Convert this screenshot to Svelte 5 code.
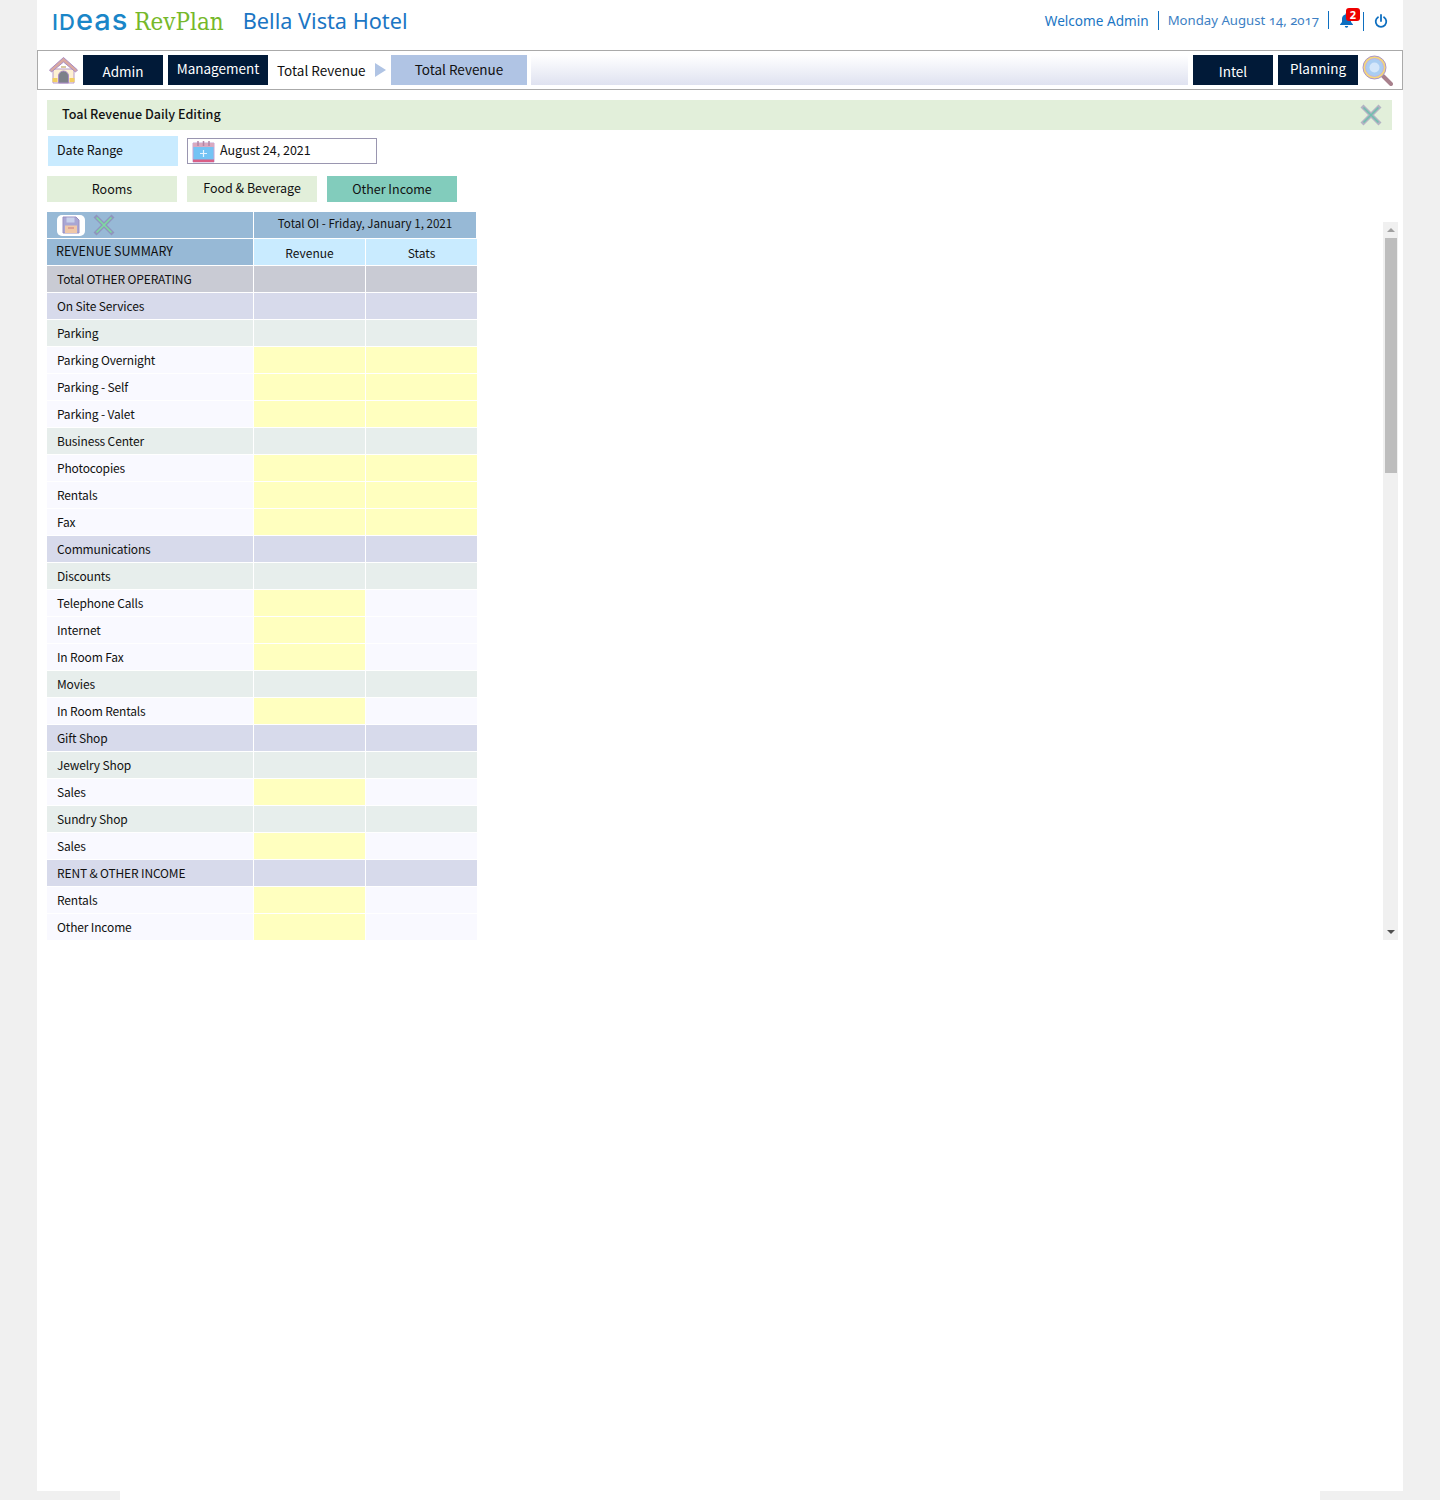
<script>
  const rows = [
    { label: 'Total OTHER OPERATING', kind: 'total' },
    { label: 'On Site Services', kind: 'section' },
    { label: 'Parking', kind: 'group' },
    { label: 'Parking Overnight', kind: 'leaf', rev: true, stats: true },
    { label: 'Parking - Self', kind: 'leaf', rev: true, stats: true },
    { label: 'Parking - Valet', kind: 'leaf', rev: true, stats: true },
    { label: 'Business Center', kind: 'group' },
    { label: 'Photocopies', kind: 'leaf', rev: true, stats: true },
    { label: 'Rentals', kind: 'leaf', rev: true, stats: true },
    { label: 'Fax', kind: 'leaf', rev: true, stats: true },
    { label: 'Communications', kind: 'section' },
    { label: 'Discounts', kind: 'group' },
    { label: 'Telephone Calls', kind: 'leaf', rev: true },
    { label: 'Internet', kind: 'leaf', rev: true },
    { label: 'In Room Fax', kind: 'leaf', rev: true },
    { label: 'Movies', kind: 'group' },
    { label: 'In Room Rentals', kind: 'leaf', rev: true },
    { label: 'Gift Shop', kind: 'section' },
    { label: 'Jewelry Shop', kind: 'group' },
    { label: 'Sales', kind: 'leaf', rev: true },
    { label: 'Sundry Shop', kind: 'group' },
    { label: 'Sales', kind: 'leaf', rev: true },
    { label: 'RENT & OTHER INCOME', kind: 'section' },
    { label: 'Rentals', kind: 'leaf', rev: true },
    { label: 'Other Income', kind: 'leaf', rev: true }
  ];
</script>

{#snippet cross( size, edge, green )}
  <svg xmlns="http://www.w3.org/2000/svg" width={size} height={size} viewBox="0 0 22 22">
    <path d="M2 2l18 18M20 2L2 20" stroke={edge} stroke-width="4.200" fill="none" />
    <path d="M3.500 3.500l15 15M18.500 3.500l-15 15" stroke={green} stroke-width="1.600" fill="none" />
  </svg>
{/snippet}

<div class="page">
  <header>
    <div class="brand">
      <span class="ideas"><span class="caps">ID</span>eas</span>
      <span class="revplan">RevPlan</span>
      <span class="hotel">Bella Vista Hotel</span>
    </div>
    <div class="status">
      <span class="welcome">Welcome Admin</span>
      <span class="date">Monday August 14, 2017</span>
      <span class="bell">
        <svg xmlns="http://www.w3.org/2000/svg" width="15" height="16" viewBox="0 0 15 16">
          <path fill="#0e6fc0" d="M7.500 1a1 1 0 0 1 1 1v.6C10.700 3 12 4.800 12 7v3l2 2.500v.5H1v-.5L3 10V7c0-2.200 1.300-4 3.500-4.400V2a1 1 0 0 1 1-1zM5.800 14h3.400a1.700 1.700 0 0 1-3.400 0z" />
        </svg>
        <b>2</b>
      </span>
      <span class="power">
        <svg xmlns="http://www.w3.org/2000/svg" width="14" height="14" viewBox="0 0 14 14">
          <path d="M4 3.200a5.300 5.300 0 1 0 6 0M7 1v6" fill="none" stroke="#0e6fc0" stroke-width="1.800" stroke-linecap="round" />
        </svg>
      </span>
    </div>
  </header>

  <nav>
    <svg class="home" xmlns="http://www.w3.org/2000/svg" width="31" height="28" viewBox="0 0 31 28">
      <path d="M5 13h21v14H5z" fill="#fdf0d2" stroke="#b89ac8" />
      <path d="M15.500 1.500L1.500 14l2 2L15.500 6l12 10 2-2z" fill="#d9a9a0" stroke="#a98cc4" />
      <path d="M10.500 27v-7a5 5 0 0 1 10 0v7z" fill="#7c8088" stroke="#a98cc4" />
      <path d="M4.500 22h5v4h-5zM21.500 22h5v4h-5z" fill="#f2cf62" />
      <path d="M13 11h5" stroke="#d9c9a0" stroke-width="2" />
    </svg>
    <button class="dark low">Admin</button>
    <button class="dark wide">Management</button>
    <span class="crumb">Total Revenue</span>
    <svg class="arrow" xmlns="http://www.w3.org/2000/svg" width="11" height="14" viewBox="0 0 11 14">
      <path d="M0 0l11 7L0 14z" fill="#b0c4e4" />
    </svg>
    <button class="current">Total Revenue</button>
    <div class="fill"></div>
    <button class="dark low">Intel</button>
    <button class="dark flush">Planning</button>
    <svg class="search" xmlns="http://www.w3.org/2000/svg" width="31" height="31" viewBox="0 0 31 31">
      <path d="M21 21l8 8" stroke="#a8808c" stroke-width="4" stroke-linecap="round" />
      <circle cx="12.500" cy="12.500" r="11.500" fill="#f5d878" stroke="#a994cc" stroke-width="1" />
      <circle cx="12.500" cy="12.500" r="9" fill="#a9cdf2" stroke="#c3b4dc" stroke-width="1" />
      <circle cx="12.500" cy="12.500" r="5" fill="#d4e6fa" />
    </svg>
  </nav>

  <div class="title">
    <span>Toal Revenue Daily Editing</span>
    {@render cross( 22, '#b3b3c3', '#6fbfae' )}
  </div>

  <div class="range">
    <div class="range-label">Date Range</div>
    <div class="range-input">
      <svg xmlns="http://www.w3.org/2000/svg" width="23" height="23" viewBox="0 0 23 23">
        <path d="M1 3h21v19H1z" fill="#73c3f4" stroke="#c3a6d6" />
        <path d="M1 3h21v4H1z" fill="#d9a9c0" />
        <path d="M1 19.500h21V22H1z" fill="#d95f86" />
        <path d="M6 1v5M11.500 1v5M17 1v5" stroke="#b085a6" stroke-width="1.500" />
        <path d="M11.500 10v7M8 13.500h7" stroke="#e6f4ff" stroke-width="1.200" />
      </svg>
      <span>August 24, 2021</span>
    </div>
  </div>

  <div class="tabs">
    <button>Rooms</button>
    <button class="raised">Food &amp; Beverage</button>
    <button class="active">Other Income</button>
  </div>

  <div class="content">
    <div class="grid">
      <div class="head tools">
        <span class="save">
          <svg xmlns="http://www.w3.org/2000/svg" width="18" height="18" viewBox="0 0 18 18">
            <path d="M1 1h13l3 3v13H1z" fill="#a9a6d4" stroke="#9a8fc0" />
            <path d="M4.500 1.500h8v5h-8z" fill="#c8d0ea" />
            <path d="M3 9.500h12V17H3z" fill="#f0c8a8" />
            <path d="M6 12h6" stroke="#d9958c" stroke-width="1.500" />
          </svg>
        </span>
        {@render cross( 22, '#8f95bd', '#7ddba0' )}
      </div>
      <div class="head span">Total OI - Friday, January 1, 2021</div>
      <div class="head summary">REVENUE SUMMARY</div>
      <div class="sub">Revenue</div>
      <div class="sub">Stats</div>
      {#each rows as row}
        <div class="cell name {row.kind}">{row.label}</div>
        <div class="cell {row.kind}" class:yellow={row.rev}></div>
        <div class="cell {row.kind}" class:yellow={row.stats}></div>
      {/each}
    </div>

    <div class="scrollbar">
      <i class="up"></i>
      <div class="thumb"></div>
      <i class="down"></i>
    </div>
  </div>
</div>
<footer></footer>

<style>
  :global(body) {
    background: #f0f0f0;
    color: #111111;
    font-family: 'Noto Sans CJK JP', 'Noto Sans', sans-serif;
    font-size: 12.500px;
  }

  button {
    appearance: none;
    border: none;
    font-family: inherit;
    margin: 0;
    padding: 0;
  }

  footer {
    background: #ffffff;
    height: 9px;
    margin: 0 120px;
  }

  header {
    align-items: center;
    box-sizing: border-box;
    display: flex;
    height: 50px;
    justify-content: space-between;
    padding: 0 15px 10px 15px;
  }

  nav {
    align-items: center;
    border: solid 1px #aaaaaa;
    box-sizing: border-box;
    display: flex;
    height: 40px;
    padding: 0 9px 0 10px;
  }

  nav > * {
    flex-shrink: 0;
  }

  .active {
    background: #82ccbc;
  }

  .arrow {
    margin: 0 5px 0 10px;
  }

  .bell {
    border-right: solid 1px #0e6fc0;
    display: flex;
    height: 19px;
    margin-right: 10px;
    margin-top: 2px;
    padding-right: 9px;
    position: relative;
  }

  .bell b {
    background: #ee0000;
    border-radius: 3px;
    color: #ffffff;
    font-size: 11px;
    height: 13px;
    left: 7px;
    line-height: 13px;
    position: absolute;
    text-align: center;
    top: -4px;
    width: 14px;
  }

  .brand {
    align-items: baseline;
    display: flex;
  }

  .caps {
    font-size: 22px;
  }

  .cell {
    box-sizing: border-box;
  }

  .content {
    display: flex;
    justify-content: space-between;
    margin: 20px 5px 0 10px;
  }

  .crumb {
    font-size: 13.500px;
    margin-left: 9px;
    white-space: nowrap;
    width: 88px;
  }

  .current {
    background: #b0c4e4;
    color: #111111;
    font-size: 13.500px;
    height: 30px;
    padding-bottom: 2px;
    width: 136px;
  }

  .dark {
    background: #011a38;
    color: #ffffff;
    font-size: 13.500px;
    height: 30px;
    margin-right: 5px;
    padding-bottom: 5px;
    width: 80px;
  }

  .dark.flush {
    margin-right: 4px;
  }

  .dark.low {
    padding: 2px 0 0 0;
  }

  .dark.wide {
    margin-right: 0;
    width: 100px;
  }

  .date {
    border-right: solid 1px #0e6fc0;
    color: #3d7fc4;
    font-family: 'Noto Sans', sans-serif;
    font-size: 13.200px;
    font-variant-numeric: oldstyle-nums;
    margin-right: 10px;
    padding-right: 9px;
  }

  .down {
    border-left: solid 4px transparent;
    border-right: solid 4px transparent;
    border-top: solid 4px #505050;
    margin-bottom: 6px;
    margin-top: auto;
  }

  .fill {
    background: linear-gradient( #ffffff, #dfe2f0 );
    height: 30px;
    margin: 0 5px 0 4px;
    width: 657px;
  }

  .grid {
    display: grid;
    gap: 1px;
    grid-auto-rows: 26px;
    grid-template-columns: 206px 111px 111px;
    margin-top: -10px;
    width: 430px;
  }

  .group {
    background: #e7eeec;
  }

  .head {
    align-items: center;
    background: #97b9d6;
    display: flex;
  }

  .home {
    margin-right: 4px;
  }

  .hotel {
    color: #1b76c4;
    font-family: 'Noto Sans', sans-serif;
    font-size: 21.700px;
    margin-left: 19px;
    position: relative;
    top: -1px;
  }

  .ideas {
    color: #1a86c8;
    font-family: 'Inter', sans-serif;
    font-size: 29px;
    font-weight: 500;
    letter-spacing: 1px;
    line-height: 1;
  }

  .leaf {
    background: #f9f9ff;
  }

  .name {
    align-items: center;
    display: flex;
    font-size: 12px;
    letter-spacing: -0.150px;
    padding: 0 0 2px 10px;
  }

  .page {
    background: #ffffff;
    box-sizing: border-box;
    height: 1491px;
    margin: 0 37px;
  }

  .power {
    display: flex;
    margin-top: 2px;
  }

  .range {
    align-items: center;
    display: flex;
    gap: 9px;
    margin: 6px 0 0 11px;
  }

  .range-input {
    align-items: center;
    border: solid 1px #9a96b0;
    box-sizing: border-box;
    display: flex;
    gap: 5px;
    height: 26px;
    padding-left: 4px;
    width: 190px;
  }

  .range-input span {
    padding-bottom: 4px;
  }

  .range-label {
    align-items: center;
    background: #c9ebff;
    box-sizing: border-box;
    display: flex;
    height: 30px;
    padding: 0 0 4px 9px;
    width: 130px;
  }

  .revplan {
    color: #76b82a;
    font-family: 'DejaVu Serif', serif;
    font-size: 24px;
    font-stretch: condensed;
    margin-left: 6px;
  }

  .save {
    align-items: center;
    background: #ffffff;
    border-radius: 5px;
    display: flex;
    height: 21px;
    justify-content: center;
    margin-left: 10px;
    width: 28px;
  }

  .scrollbar {
    align-items: center;
    background: #f0f0f0;
    display: flex;
    flex-direction: column;
    height: 718px;
    width: 15px;
  }

  .section {
    background: #d7daeb;
  }

  .span {
    font-size: 11.600px;
    grid-column: span 2;
    justify-content: center;
    padding-bottom: 4px;
    width: 222px;
  }

  .status {
    align-items: center;
    color: #1b76c4;
    display: flex;
    font-family: 'Noto Sans', sans-serif;
    font-size: 13.600px;
  }

  .sub {
    align-items: center;
    background: #c9ebff;
    display: flex;
    font-size: 12px;
    justify-content: center;
  }

  .summary {
    font-size: 12.500px;
    padding: 0 0 3px 9px;
  }

  .tabs {
    display: flex;
    gap: 10px;
    margin: 10px 0 0 10px;
  }

  .tabs button {
    background: #e2efda;
    color: #111111;
    font-size: 12.500px;
    height: 26px;
    padding-bottom: 2px;
    width: 130px;
  }

  .tabs button.raised {
    padding-bottom: 4px;
  }

  .tabs button.active {
    background: #82ccbc;
  }

  .thumb {
    background: #bdbdbd;
    height: 235px;
    margin-top: 6px;
    width: 12px;
  }

  .title {
    align-items: center;
    background: #e2efda;
    display: flex;
    font-size: 12.600px;
    font-weight: 500;
    height: 30px;
    justify-content: space-between;
    margin: 10px 11px 0 10px;
    padding: 0 10px 0 15px;
  }

  .title span {
    padding-bottom: 4px;
  }

  .tools {
    gap: 8px;
  }

  .total {
    background: #c9cbd4;
  }

  .up {
    border-bottom: solid 4px #a0a0a0;
    border-left: solid 4px transparent;
    border-right: solid 4px transparent;
    margin-top: 6px;
  }

  .welcome {
    border-right: solid 1px #0e6fc0;
    margin-right: 9px;
    padding-right: 9px;
  }

  .yellow {
    background: #ffffbf;
  }
</style>
